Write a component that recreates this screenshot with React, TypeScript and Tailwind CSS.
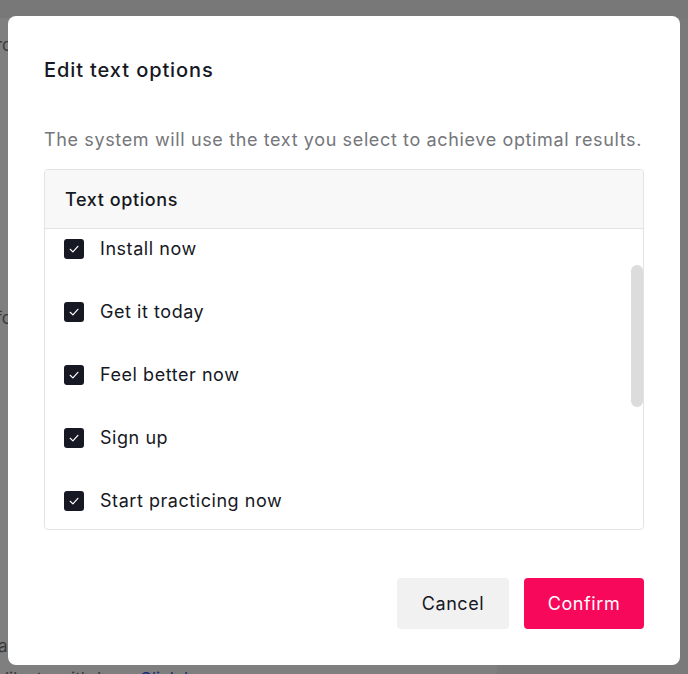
import React from "react";

const items = [
  "Install now",
  "Get it today",
  "Feel better now",
  "Sign up",
  "Start practicing now",
  "Download now",
  "Learn more",
  "Try it free",
  "Join today",
];

function CheckBox() {
  return (
    <span className="flex h-5 w-5 shrink-0 items-center justify-center rounded-[3px] bg-[#161823]">
      <svg width="14" height="14" viewBox="0 0 14 14" fill="none">
        <path d="M3.2 7.3 L5.9 9.9 L10.9 4.3" stroke="#ffffff" strokeWidth="1.2" strokeLinecap="round" strokeLinejoin="round" />
      </svg>
    </span>
  );
}

export default function App() {
  return (
    <div className="relative h-[674px] w-[688px] overflow-hidden bg-[#777777] font-['Inter',sans-serif]">
      {/* background page (dimmed) */}
      <div className="flex h-full flex-col">
        <div className="h-[18px] shrink-0 bg-[#787878]" />
        <div className="flex flex-1">
          <div className="flex w-[497px] flex-col bg-[#7f7f7f] text-[17px] text-[#3a3a3a]">
            <div className="ml-[-4px] mt-[17px] leading-5">ro</div>
            <div className="ml-[-4px] mt-[253px] leading-5">fo</div>
            <div className="ml-[-2px] mt-[308px] leading-5">a</div>
            <div className="ml-[-4px] mt-[13px] leading-5">
              l like to withdraw. <span className="text-[#1f2b7a]">Click here</span>
            </div>
          </div>
          <div className="flex-1 bg-[#7a7a7a]" />
        </div>
      </div>

      {/* modal */}
      <div className="absolute left-[8px] top-[16px] flex h-[649px] w-[672px] flex-col rounded-lg bg-white px-9 pt-10">
        <h2 className="text-[20px] font-medium leading-7 tracking-[0.9px] text-[#161823]">Edit text options</h2>
        <p className="mt-[42px] text-[18px] leading-7 tracking-[0.63px] text-[#75767b]">
          The system will use the text you select to achieve optimal results.
        </p>

        <div className="mt-[15px] flex h-[361px] flex-col overflow-hidden rounded border border-[#e3e3e6]">
          <div className="flex h-[59px] shrink-0 items-center border-b border-[#e3e3e6] bg-[#f8f8f8] pl-[20px]">
            <span className="text-[18px] font-medium tracking-[0.6px] text-[#161823]">Text options</span>
          </div>
          <div className="relative flex-1 overflow-hidden">
            <div className="-mt-[12px] flex flex-col">
              {items.map((t) => (
                <div key={t} className="flex h-[63px] items-center gap-4 pl-[19px]">
                  <CheckBox />
                  <span className="text-[18px] tracking-[0.55px] text-[#161823]">{t}</span>
                </div>
              ))}
            </div>
            <div className="absolute right-0 top-[36px] h-[142px] w-3 rounded-full bg-[#dcdcdc]" />
          </div>
        </div>

        <div className="mt-[48px] flex justify-end gap-[15px]">
          <button className="h-[51px] w-[112px] rounded bg-[#f1f1f2] text-[18px] tracking-[0.6px] text-[#161823]">Cancel</button>
          <button className="h-[51px] w-[120px] rounded bg-[#f7085b] text-[18px] tracking-[0.6px] text-white">Confirm</button>
        </div>
      </div>
    </div>
  );
}
